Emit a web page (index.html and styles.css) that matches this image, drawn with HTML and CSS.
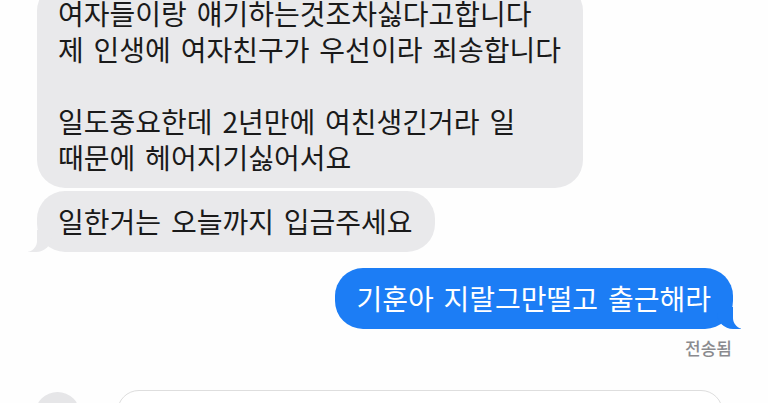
FILE: index.html
```html
<!DOCTYPE html>
<html lang="ko">
<head>
    <meta charset="UTF-8">
    <meta name="viewport" content="width=device-width, initial-scale=1.0">
    <title>메시지</title>
    <link rel="stylesheet" href="styles.css">
</head>
<body>
    <div class="chat-screen">
        <div class="thread">
            <div class="bubble them">
                여자들이랑 얘기하는것조차싫다고합니다<br>
                제 인생에 여자친구가 우선이라 죄송합니다<br>
                <br>
                일도중요한데 2년만에 여친생긴거라 일<br>
                때문에 헤어지기싫어서요
            </div>
            <div class="bubble them tail">일한거는 오늘까지 입금주세요</div>

            <div class="bubble me tail">기훈아 지랄그만떨고 출근해라</div>
            <div class="delivered">전송됨</div>
        </div>

        <div class="composer">
            <div class="composer-button"></div>
            <div class="composer-input"></div>
        </div>
    </div>
</body>
</html>
```

FILE: styles.css
```css
* {
    margin: 0;
    padding: 0;
    box-sizing: border-box;
}

body {
    font-family: "Noto Sans CJK KR", "Noto Sans", sans-serif;
    background: #fefefe;
    width: 768px;
    height: 403px;
    overflow: hidden;
}

.chat-screen {
    display: flex;
    flex-direction: column;
}

.thread {
    display: flex;
    flex-direction: column;
    align-items: flex-start;
    padding: 0 35px 0 37px;
    margin-top: -17px;
}

.bubble {
    position: relative;
    font-size: 28px;
    line-height: 36px;
    word-spacing: 2px;
    padding: 12px 22px 13px 21px;
    border-radius: 28px;
}

.bubble.them {
    background: #e9e9eb;
    color: #1a1a1a;
    margin-bottom: 3px;
}

.bubble.me {
    background: #1c7df5;
    color: #fff;
    align-self: flex-end;
    margin-top: 13px;
}

/* little tails under the last bubble of a group */
.bubble.tail::before,
.bubble.tail::after {
    content: "";
    position: absolute;
    bottom: 0;
    height: 22px;
}

.bubble.them.tail::before {
    left: -9px;
    width: 24px;
    background: #e9e9eb;
    border-bottom-right-radius: 16px;
}

.bubble.them.tail::after {
    left: -12px;
    width: 12px;
    background: #fefefe;
    border-bottom-right-radius: 11px;
}

.bubble.me.tail::before {
    right: -8px;
    width: 24px;
    background: #1c7df5;
    border-bottom-left-radius: 16px;
}

.bubble.me.tail::after {
    right: -12px;
    width: 12px;
    background: #fefefe;
    border-bottom-left-radius: 11px;
}

.delivered {
    align-self: flex-end;
    font-size: 17px;
    line-height: 20px;
    font-weight: 500;
    color: #8a8a8e;
    margin-top: 9px;
    margin-right: 1px;
}

.composer {
    display: flex;
    align-items: flex-start;
    gap: 37px;
    padding: 0 45px 0 35px;
    margin-top: 32px;
}

.composer-button {
    width: 45px;
    height: 45px;
    border-radius: 50%;
    background: #e6e6e8;
    margin-top: 2px;
}

.composer-input {
    flex: 1;
    height: 44px;
    border: 1.5px solid #dedede;
    border-radius: 22px;
    background: #fff;
}
```
